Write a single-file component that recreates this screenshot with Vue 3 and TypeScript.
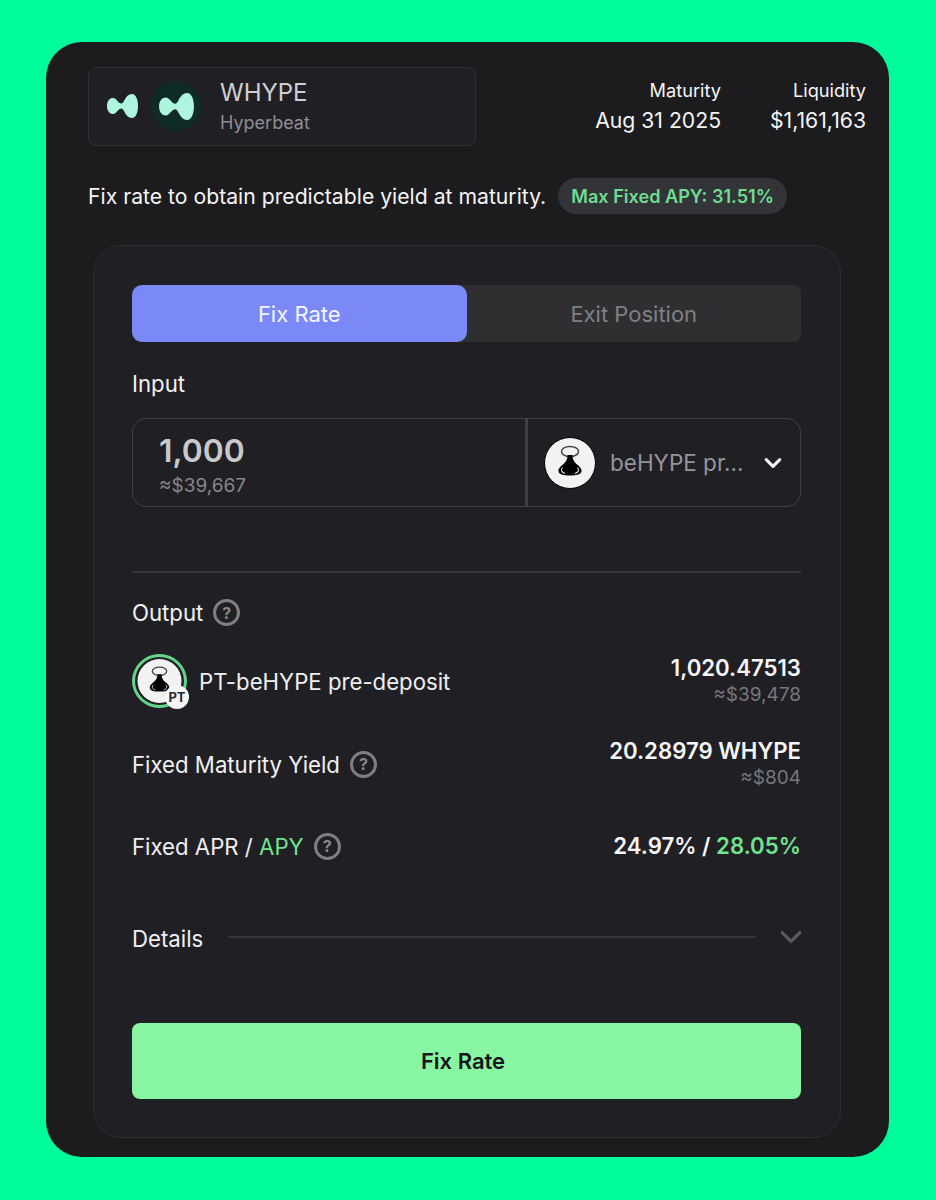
<script setup lang="ts">
const stats = [
  { label: 'Maturity', value: 'Aug 31 2025' },
  { label: 'Liquidity', value: '$1,161,163' },
]
const wing = 'M0 12C0 6.500 3 4 6 4C9.500 4 11 9.500 14.500 9.500C17.500 9.500 18 0 25 0C29 0 31 6 31 12C31 18 29 24 25 24C18 24 17.500 14.500 14.500 14.500C11 14.500 9.500 20 6 20C3 20 0 17.500 0 12Z'
const flask = 'M23.500 18H28.500C28.500 22 29.500 24.500 32.500 27C36 30 38 32 37.500 34.500C37 37.500 32 38.500 26 38.500C20 38.500 15 37.500 14.500 34.500C14 32 16 30 19.500 27C22.500 24.500 23.500 22 23.500 18Z'
</script>

<template>
  <div class="page">
    <div class="card">
      <header class="top">
        <div class="market">
          <svg class="wing-a" viewBox="0 0 31 24"><path :d="wing" /></svg>
          <span class="wing-disc">
            <svg class="wing-b" viewBox="0 0 31 24"><path :d="wing" /></svg>
          </span>
          <div class="market-text">
            <div class="market-name">WHYPE</div>
            <div class="market-sub">Hyperbeat</div>
          </div>
        </div>
        <div class="stats">
          <div v-for="s in stats" :key="s.label" class="stat">
            <div class="stat-label">{{ s.label }}</div>
            <div class="stat-value">{{ s.value }}</div>
          </div>
        </div>
      </header>

      <div class="tagline">
        <span>Fix rate to obtain predictable yield at maturity.</span>
        <span class="pill">Max Fixed APY: 31.51%</span>
      </div>

      <section class="panel">
        <div class="tabs">
          <button class="tab active">Fix Rate</button>
          <button class="tab">Exit Position</button>
        </div>

        <div class="label input-label">Input</div>
        <div class="input-box">
          <div class="amount">
            <div class="amount-value">1,000</div>
            <div class="amount-usd">≈$39,667</div>
          </div>
          <div class="picker">
            <svg class="token" viewBox="0 0 52 52">
              <circle cx="26" cy="26" r="25.500" fill="#f2f2f2" stroke="#000" />
              <ellipse cx="26" cy="14.500" rx="8.500" ry="5" fill="none" stroke="#444" stroke-width="1.500" />
              <path :d="flask" fill="#000" />
              <path d="M18.500 30.500C16.500 33 17.500 35.500 21 36.500M33.500 30.500C35.500 33 34.500 35.500 31 36.500" fill="none" stroke="#e8e8e8" stroke-width="1.100" />
            </svg>
            <span class="picker-name">beHYPE pr...</span>
            <svg class="caret" viewBox="0 0 16 10"><path d="M2 2l6 6 6-6" /></svg>
          </div>
        </div>

        <div class="rule"></div>

        <div class="label-row output-label">
          <span class="label">Output</span>
          <span class="help">?</span>
        </div>

        <div class="row pt-row">
          <div class="pt">
            <span class="pt-icon">
              <svg class="pt-token" viewBox="0 0 52 52">
                <circle cx="26" cy="26" r="26" fill="#f2f2f2" />
                <ellipse cx="26" cy="14.500" rx="8.500" ry="5" fill="none" stroke="#444" stroke-width="1.500" />
                <path :d="flask" fill="#000" />
                <path d="M18.500 30.500C16.500 33 17.500 35.500 21 36.500M33.500 30.500C35.500 33 34.500 35.500 31 36.500" fill="none" stroke="#e8e8e8" stroke-width="1.100" />
              </svg>
              <span class="pt-badge">PT</span>
            </span>
            <span class="label">PT-beHYPE pre-deposit</span>
          </div>
          <div class="figures">
            <div class="fig-main">1,020.47513</div>
            <div class="fig-usd">≈$39,478</div>
          </div>
        </div>

        <div class="row yield-row">
          <div class="label-row">
            <span class="label">Fixed Maturity Yield</span>
            <span class="help">?</span>
          </div>
          <div class="figures">
            <div class="fig-main">20.28979 WHYPE</div>
            <div class="fig-usd">≈$804</div>
          </div>
        </div>

        <div class="row apr-row">
          <div class="label-row">
            <span class="label">Fixed APR / <em>APY</em></span>
            <span class="help">?</span>
          </div>
          <div class="fig-main">24.97% / <em>28.05%</em></div>
        </div>

        <div class="details">
          <span class="label">Details</span>
          <span class="details-line"></span>
          <svg class="details-caret" viewBox="1 1 18 10"><path d="M2 2l8 8 8-8" /></svg>
        </div>

        <button class="submit">Fix Rate</button>
      </section>
    </div>
  </div>
</template>

<style>
html,
body {
  background: #00fb9b;
}
</style>

<style scoped>
.page {
  height: 1200px;
  box-sizing: border-box;
  padding: 42px 47px 0 46px;
  font-family: Inter, 'Liberation Sans', sans-serif;
  color: #f4f4f5;
}
.card {
  height: 1115px;
  box-sizing: border-box;
  padding: 25px 23px 0 42px;
  background: #1c1c1e;
  border-radius: 36px;
}
.top {
  display: flex;
  justify-content: space-between;
  align-items: flex-start;
}
.market {
  width: 388px;
  height: 79px;
  box-sizing: border-box;
  display: flex;
  align-items: center;
  padding: 0 0 1px 18px;
  background: #202024;
  border: 1px solid #303034;
  border-radius: 8px;
}
.market path {
  fill: #aef5e0;
}
.wing-a {
  width: 31px;
  height: 24px;
}
.wing-disc {
  width: 50px;
  height: 50px;
  margin-left: 13px;
  border-radius: 50%;
  background: #0f2b26;
  display: flex;
  align-items: center;
  justify-content: center;
}
.wing-b {
  width: 35px;
  height: 27px;
}
.market-text {
  margin: 1px 0 0 19px;
}
.market-name {
  font-size: 24px;
  line-height: 30px;
  color: #cfcfd2;
}
.market-sub {
  font-size: 18px;
  line-height: 24px;
  margin-top: 3px;
  color: #8e8e93;
}
.stats {
  display: flex;
  gap: 49px;
  padding-top: 11px;
  text-align: right;
}
.stat-label {
  font-size: 18.200px;
  line-height: 24px;
}
.stat-value {
  font-size: 21.200px;
  line-height: 30px;
  margin-top: 3px;
}
.tagline {
  display: flex;
  align-items: center;
  gap: 12px;
  height: 36px;
  margin-top: 32px;
  font-size: 21.200px;
}
.pill {
  padding: 0 13px;
  height: 36px;
  display: flex;
  align-items: center;
  border-radius: 18px;
  background: #323437;
  color: #6fdc92;
  font-size: 18.100px;
  font-weight: 600;
}
.panel {
  width: 748px;
  height: 893px;
  box-sizing: border-box;
  margin: 31px 0 0 5px;
  padding: 39px 39px 0 38px;
  background: #202024;
  border: 1px solid #2f2f33;
  border-radius: 28px;
}
.tabs {
  display: flex;
  height: 57px;
  background: #2f2f32;
  border-radius: 8px;
}
.tab {
  flex: 1;
  border: none;
  border-radius: 10px;
  background: transparent;
  font-family: inherit;
  font-size: 22px;
  color: #808084;
}
.tab.active {
  background: #7b89f8;
  color: #f4f5ff;
}
.label {
  font-size: 22.200px;
  color: #f0f0f2;
}
.label em,
.fig-main em {
  font-style: normal;
  color: #6fe38e;
}
.input-label {
  display: block;
  margin-top: 29px;
  line-height: 26px;
}
.input-box {
  display: flex;
  height: 89px;
  box-sizing: border-box;
  margin-top: 21px;
  border: 1px solid #404044;
  border-radius: 14px;
}
.amount {
  width: 395px;
  box-sizing: border-box;
  padding: 13px 0 0 26px;
  border-right: 3px solid #404044;
}
.amount-value {
  font-size: 31.800px;
  line-height: 38px;
  font-weight: 600;
  color: #c9c9cc;
}
.amount-usd {
  font-size: 19px;
  line-height: 26px;
  margin-top: 3px;
  color: #86868b;
}
.picker {
  flex: 1;
  display: flex;
  align-items: center;
  padding-left: 16px;
}
.token {
  width: 52px;
  height: 52px;
}
.picker-name {
  margin-left: 14px;
  font-size: 22.500px;
  color: #94969c;
}
.caret {
  width: 18px;
  height: 12px;
  margin-left: 21px;
}
.caret path {
  fill: none;
  stroke: #f2f2f2;
  stroke-width: 2.800;
  stroke-linecap: round;
  stroke-linejoin: round;
}
.rule {
  height: 2px;
  margin-top: 64px;
  background: #36363a;
}
.label-row {
  display: flex;
  align-items: center;
  gap: 10px;
}
.output-label {
  margin-top: 26px;
  height: 27px;
}
.help {
  width: 27px;
  height: 27px;
  box-sizing: border-box;
  display: flex;
  align-items: center;
  justify-content: center;
  border: 3px solid #7f7f83;
  border-radius: 50%;
  font-size: 16px;
  font-weight: 700;
  color: #87878b;
}
.row {
  display: flex;
  justify-content: space-between;
  align-items: center;
}
.pt-row {
  margin-top: 28px;
  height: 54px;
}
.pt {
  display: flex;
  align-items: center;
  gap: 12px;
}
.pt-icon {
  position: relative;
  width: 55px;
  height: 54px;
  box-sizing: border-box;
  padding: 2px;
  display: block;
  border: 3px solid #63d68a;
  border-radius: 50%;
}
.pt-token {
  display: block;
  width: 100%;
  height: 100%;
}
.pt-badge {
  position: absolute;
  right: -5px;
  bottom: -4px;
  width: 24px;
  height: 24px;
  display: flex;
  align-items: center;
  justify-content: center;
  border-radius: 50%;
  background: #f6f6f6;
  color: #26262a;
  font-size: 13px;
  font-weight: 700;
}
.figures {
  text-align: right;
}
.fig-main {
  font-size: 22.200px;
  line-height: 28px;
  font-weight: 600;
  color: #f6f6f8;
}
.fig-usd {
  font-size: 19px;
  line-height: 26px;
  color: #77777c;
}
.yield-row {
  margin-top: 29px;
  height: 54px;
}
.apr-row {
  margin-top: 30px;
  height: 50px;
}
.details {
  display: flex;
  align-items: center;
  gap: 25px;
  height: 30px;
  margin-top: 52px;
}
.details-line {
  flex: 1;
  height: 2px;
  margin-bottom: 2px;
  background: #36363a;
}
.details-caret {
  width: 20px;
  height: 12px;
  margin-bottom: 2px;
}
.details-caret path {
  fill: none;
  stroke: #5a5a5f;
  stroke-width: 3;
  stroke-linecap: round;
  stroke-linejoin: round;
}
.submit {
  display: block;
  width: 100%;
  height: 76px;
  margin-top: 70px;
  padding: 0 7px 0 0;
  border: none;
  border-radius: 8px;
  background: #88f5a2;
  font-family: inherit;
  font-size: 22px;
  font-weight: 600;
  color: #17171a;
}
</style>
